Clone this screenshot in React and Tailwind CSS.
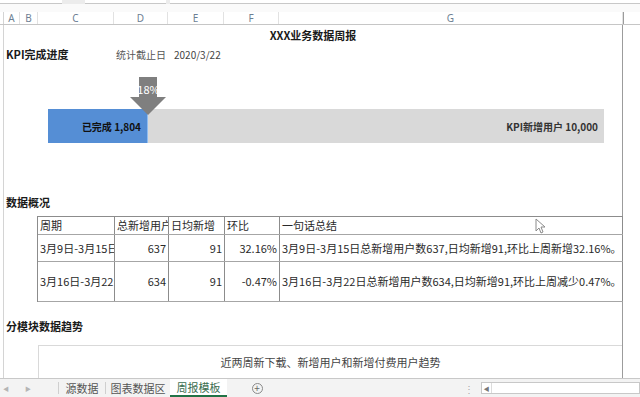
import React from "react";

const colHeads = [
  ["A", 16],
  ["B", 18],
  ["C", 76],
  ["D", 54],
  ["E", 56],
  ["F", 55],
  ["G", 344],
];

const tableRows = [
  {
    h: "h-[18px]",
    cells: ["周期", "总新增用户", "日均新增", "环比", "一句话总结"],
    head: true,
  },
  {
    h: "h-[27px]",
    cells: [
      "3月9日-3月15日",
      "637",
      "91",
      "32.16%",
      "3月9日-3月15日总新增用户数637,日均新增91,环比上周新增32.16%。",
    ],
  },
  {
    h: "h-[40px]",
    cells: [
      "3月16日-3月22日",
      "634",
      "91",
      "-0.47%",
      "3月16日-3月22日总新增用户数634,日均新增91,环比上周减少0.47%。",
    ],
  },
];

const cellW = ["w-[77px]", "w-[54px]", "w-[56px]", "w-[55px]", "w-[343px]"];

function Cursor() {
  return (
    <svg width="10" height="16" viewBox="0 0 10 16" className="absolute left-[535px] top-[193px]">
      <path d="M1 1 L1 13 L4 10 L6 15 L8 14 L6 9 L10 9 Z" fill="#fff" stroke="#8a8a8a" strokeWidth="1" />
    </svg>
  );
}

export default function App() {
  return (
    <div
      className="w-[640px] h-[397px] overflow-hidden bg-white flex flex-col text-[11px] text-[#1a1a1a]"
      style={{ fontFamily: '"Noto Sans CJK SC", "Noto Sans", sans-serif' }}
    >
      {/* formula bar remnants */}
      <div className="h-[4px] flex bg-[#ececec] shrink-0">
        <div className="w-[62px] bg-white border-b border-[#c8c8c8]" />
        <div className="w-[23px]" />
        <div className="w-[81px] bg-white border-b border-[#c8c8c8]" />
        <div className="w-[4px]" />
        <div className="flex-1 bg-white border-b border-[#c8c8c8]" />
      </div>
      <div className="h-[8px] bg-[#fafafa] shrink-0" />

      {/* column headers */}
      <div className="h-[13px] flex border-b border-[#c6c6c6] shrink-0 bg-white">
        <div className="w-[4px] border-r border-[#d4d4d4]" />
        {colHeads.map(([l, w]) => (
          <div
            key={l}
            style={{ width: w }}
            className="border-r border-[#e2e2e2] flex items-center justify-center text-[10px] leading-none text-[#6d7f93]"
          >
            <span style={{ fontFamily: '"Noto Sans", sans-serif' }}>{l}</span>
          </div>
        ))}
        <div className="flex-1 border-l border-[#9c9c9c]" />
      </div>

      {/* sheet */}
      <div className="relative flex-1 flex overflow-hidden">
        <div className="w-[4px] border-r border-[#d4d4d4] shrink-0" />
        <div className="w-[619px] shrink-0 border-r border-[#9c9c9c] flex flex-col">
          <div className="h-[20px] flex items-center justify-center font-bold">XXX业务数据周报</div>
          <div className="h-[19px] flex items-center">
            <div className="w-[110px] pl-[2px] font-bold">KPI完成进度</div>
            <div className="w-[60px] pl-[2px] text-[10px] text-[#555]">统计截止日</div>
            <div className="text-[10px] text-[#444]">2020/3/22</div>
          </div>
          <div className="h-[45px] shrink-0" />
          <div className="relative ml-[44px] w-[556px] h-[34px] flex font-bold text-[10px]">
            <div className="w-[100px] bg-[#558ed5] border-r border-[#8fbcf0] flex items-center justify-end pr-[6px] text-[#111]">
              已完成 1,804
            </div>
            <div className="flex-1 bg-[#d9d9d9] flex items-center justify-end pr-[6px] text-[#333]">
              KPI新增用户 10,000
            </div>
            <div className="absolute left-[82px] top-[-32px] w-[37px] h-[38px]">
              <svg width="37" height="38" viewBox="0 0 37 38" className="absolute left-0 top-0">
                <path d="M9 0 H27 V20 H36 L18 38 L0 20 H9 Z" fill="#7f7f7f" />
              </svg>
              <div className="absolute left-0 top-[7px] w-[37px] text-center text-white text-[11px] font-normal leading-none">
                18%
              </div>
            </div>
          </div>
          <div className="h-[49px] shrink-0" />
          <div className="h-[20px] flex items-center pl-[2px] font-bold">数据概况</div>
          <div className="h-[4px] shrink-0" />
          <div className="ml-[33px] border-t border-l border-[#8c8c8c] w-[586px]">
            {tableRows.map((r, ri) => (
              <div key={ri} className={`${r.h} flex border-b border-[#a6a6a6]`}>
                {r.cells.map((c, ci) => (
                  <div
                    key={ci}
                    className={`${cellW[ci]} shrink-0 border-r border-[#8c8c8c] flex items-center overflow-hidden whitespace-nowrap text-[#2a2a2a] ${
                      !r.head && ci > 0 && ci < 4 ? "justify-end pr-[2px]" : "pl-[2px]"
                    }`}
                  >
                    {c}
                  </div>
                ))}
              </div>
            ))}
          </div>
          <div className="h-[14px] shrink-0" />
          <div className="h-[20px] flex items-center pl-[2px] font-bold">分模块数据趋势</div>
          <div className="h-[9px] shrink-0" />
          <div className="ml-[34px] flex-1 border-t border-l border-[#d9d9d9] flex items-center justify-center text-[#444]">
            近两周新下载、新增用户和新增付费用户趋势
          </div>
        </div>
        <div className="flex-1" />
        <Cursor />
      </div>

      {/* sheet tabs */}
      <div className="h-[19px] shrink-0 bg-[#f3f3f3] border-t border-[#c8c8c8] flex items-stretch text-[11px] text-[#555]">
        <div className="w-[58px] flex items-center text-[6px] text-[#b5b5b5]">
          <span className="ml-[3px]">◀</span>
          <span className="ml-[16px]">▶</span>
        </div>
        <div className="w-[47px] flex items-center justify-center border-l border-[#cfcfcf] my-[3px]">源数据</div>
        <div className="w-[65px] flex items-center justify-center border-l border-[#cfcfcf] my-[3px]">图表数据区</div>
        <div className="w-[57px] flex items-center justify-center bg-white border-b-2 border-[#217346] text-[#3b6e50]">
          周报模板
        </div>
        <div className="w-[60px] flex items-center justify-center">
          <div className="w-[11px] h-[11px] rounded-full border border-[#8a8a8a] flex items-center justify-center text-[10px] leading-none text-[#666]">
            +
          </div>
        </div>
        <div className="w-[194px] flex items-center justify-end pr-[7px] text-[#aaa] text-[10px]">⋮</div>
        <div className="flex-1 my-[3px] bg-white border border-[#c8c8c8] flex items-center">
          <div className="w-[10px] h-full border-r border-[#dcdcdc] flex items-center justify-center text-[6px] text-[#777]">◀</div>
        </div>
      </div>
    </div>
  );
}
